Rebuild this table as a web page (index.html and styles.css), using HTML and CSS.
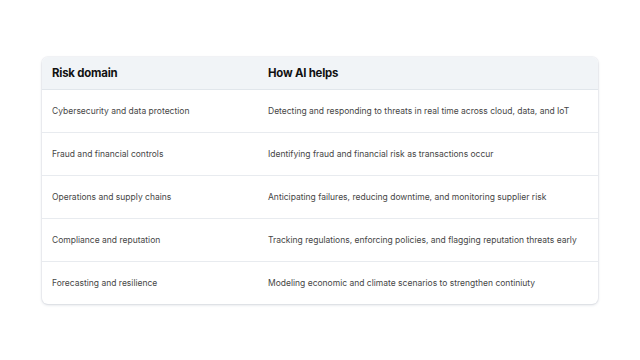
FILE: index.html
```html
<!DOCTYPE html>
<html>
<head>
<meta charset="utf-8">
<link rel="stylesheet" href="styles.css">
</head>
<body>
<div class="page">
  <div class="card">
    <table class="tbl">
      <thead>
        <tr><th class="c1">Risk domain</th><th class="c2">How AI helps</th></tr>
      </thead>
      <tbody>
        <tr><td>Cybersecurity and data protection</td><td>Detecting and responding to threats in real time across cloud, data, and IoT</td></tr>
        <tr><td>Fraud and financial controls</td><td>Identifying fraud and financial risk as transactions occur</td></tr>
        <tr><td>Operations and supply chains</td><td>Anticipating failures, reducing downtime, and monitoring supplier risk</td></tr>
        <tr><td>Compliance and reputation</td><td>Tracking regulations, enforcing policies, and flagging reputation threats early</td></tr>
        <tr><td>Forecasting and resilience</td><td>Modeling economic and climate scenarios to strengthen continiuty</td></tr>
      </tbody>
    </table>
  </div>
</div>
</body>
</html>
```
FILE: styles.css
```css
html, body { margin: 0; padding: 0; background: #ffffff; }
.page {
  width: 640px; height: 360px;
  display: flex; align-items: center; justify-content: center;
}
.card {
  width: 556px;
  border-radius: 6px;
  background: #fff;
  box-shadow: 0 1px 3px rgba(40, 60, 90, 0.18), 0 0 0 1px rgba(40,60,90,0.04);
  overflow: hidden;
}
.tbl {
  width: 100%;
  border-collapse: collapse;
  font-family: Inter, "Noto Sans", sans-serif;
}
.tbl th {
  background: #f1f4f7;
  height: 32px;
  padding: 0 10px;
  text-align: left;
  font-size: 11.4px;
  font-weight: 700;
  color: #111;
  letter-spacing: -0.2px;
  border-bottom: 1px solid #e1e6eb;
}
.tbl th.c1 { width: 196px; }
.tbl td {
  height: 42px;
  padding: 0 10px;
  font-size: 8.5px;
  color: #464646;
  border-top: 1px solid #e8ebef;
}
.tbl tbody tr:first-child td { border-top: none; }
```
